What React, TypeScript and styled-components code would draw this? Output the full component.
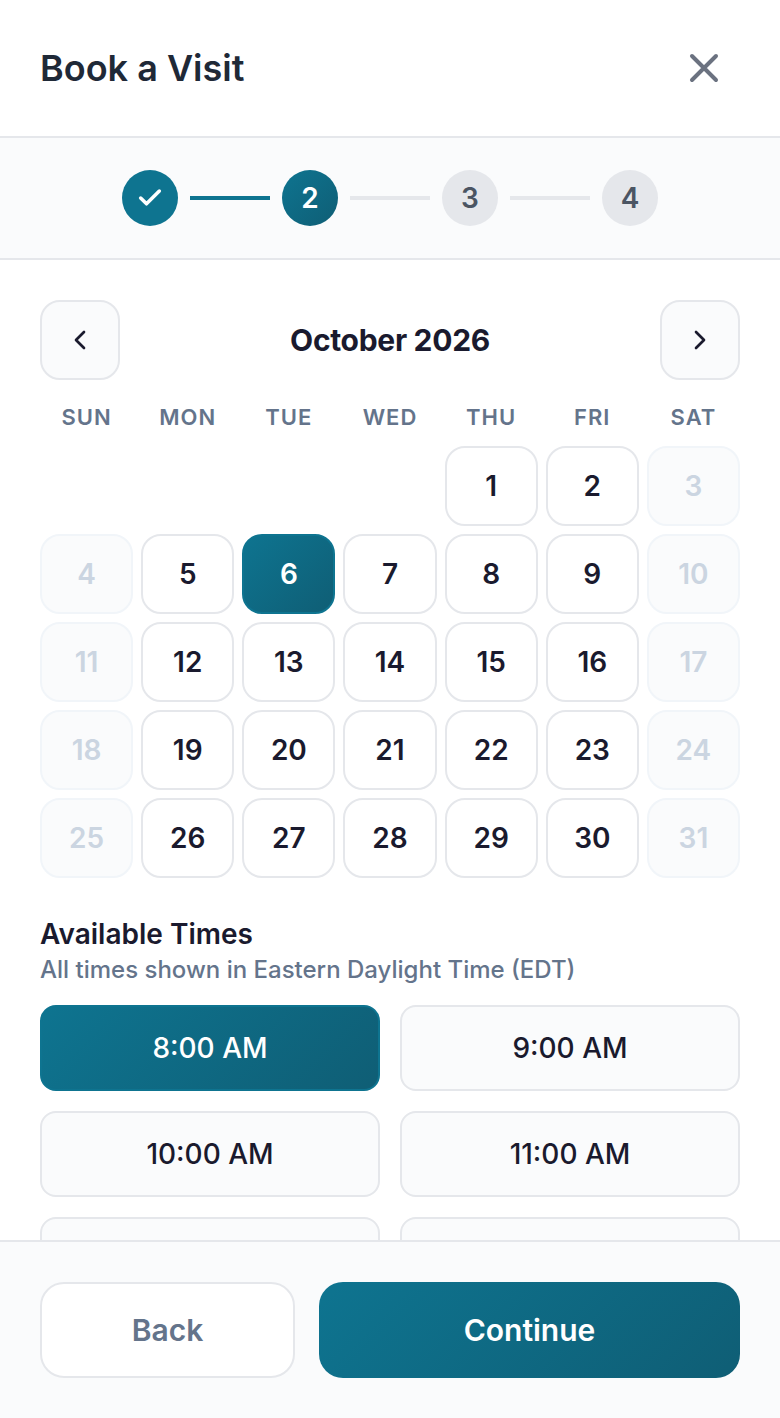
import React from "react";
import styled, { createGlobalStyle } from "styled-components";

const Global = createGlobalStyle`
  html, body { margin: 0; padding: 0; background: #fff; }
  * { box-sizing: border-box; }
  body { font-family: Inter, "Liberation Sans", sans-serif; }
`;

const teal = "linear-gradient(135deg, #0e7490 0%, #0f5e75 100%)";
const panel = "#fafbfc";

const Page = styled.div`
  width: 780px;
  height: 1418px;
  display: flex;
  flex-direction: column;
  background: #fff;
  overflow: hidden;
`;
const Header = styled.header`
  height: 138px;
  flex: none;
  display: flex;
  align-items: center;
  justify-content: space-between;
  padding: 0 40px;
  border-bottom: 2px solid #e5e7eb;
`;
const Title = styled.h1`
  margin: 0;
  font-size: 36px;
  line-height: 44px;
  font-weight: 600;
  color: #1f2937;
`;
const CloseButton = styled.button`
  width: 72px;
  height: 72px;
  padding: 0;
  border: 0;
  background: none;
  color: #6b7280;
  display: flex;
  align-items: center;
  justify-content: center;
`;
const Stepper = styled.div`
  height: 122px;
  flex: none;
  display: flex;
  align-items: center;
  justify-content: center;
  gap: 12px;
  background: ${panel};
  border-bottom: 2px solid #e5e7eb;
`;
const Step = styled.div<{ $state: "done" | "active" | "todo" }>`
  width: 56px;
  height: 56px;
  border-radius: 50%;
  display: flex;
  align-items: center;
  justify-content: center;
  font-size: 28px;
  font-weight: 600;
  color: ${(p) => (p.$state === "todo" ? "#4b5563" : "#fff")};
  background: ${(p) =>
    p.$state === "todo" ? "#e5e7eb" : p.$state === "done" ? "#0e7490" : teal};
`;
const Connector = styled.div<{ $done?: boolean }>`
  width: 80px;
  height: 4px;
  background: ${(p) => (p.$done ? "#0e7490" : "#e5e7eb")};
`;
const Content = styled.main`
  flex: 1;
  min-height: 0;
  overflow: hidden;
  padding: 40px 40px 0;
`;
const MonthNav = styled.div`
  display: flex;
  align-items: center;
  justify-content: space-between;
  margin-bottom: 16px;
`;
const NavButton = styled.button`
  width: 80px;
  height: 80px;
  padding: 0;
  border: 2px solid #e5e7eb;
  border-radius: 20px;
  background: ${panel};
  color: #1a1a2e;
  display: flex;
  align-items: center;
  justify-content: center;
`;
const Month = styled.h2`
  margin: 0;
  font-size: 30px;
  font-weight: 700;
  letter-spacing: -0.01em;
  color: #1a1a2e;
`;
const Weekdays = styled.div`
  display: grid;
  grid-template-columns: repeat(7, 1fr);
  gap: 8px;
  margin-bottom: 8px;
`;
const Weekday = styled.div`
  height: 42px;
  display: flex;
  align-items: center;
  justify-content: center;
  font-size: 22px;
  font-weight: 600;
  letter-spacing: 1px;
  color: #64748b;
`;
const Days = styled.div`
  display: grid;
  grid-template-columns: repeat(7, 1fr);
  gap: 8px;
`;
const Day = styled.button<{ $state: "open" | "off" | "selected" }>`
  height: 80px;
  padding: 0;
  border-radius: 20px;
  font-family: inherit;
  font-size: 28px;
  font-weight: 600;
  border: 2px solid
    ${(p) =>
      p.$state === "selected" ? "#0e7490" : p.$state === "off" ? "#f1f5f9" : "#e5e7eb"};
  background: ${(p) =>
    p.$state === "selected" ? teal : p.$state === "off" ? panel : "#fff"};
  color: ${(p) =>
    p.$state === "selected" ? "#fff" : p.$state === "off" ? "#cbd5e1" : "#1a1a2e"};
`;
const TimesHeading = styled.h3`
  margin: 39px 0 0;
  font-size: 28px;
  line-height: 34px;
  font-weight: 600;
  color: #1a1a2e;
`;
const TimesNote = styled.p`
  margin: 2px 0 18px;
  font-size: 24px;
  line-height: 34px;
  font-weight: 500;
  color: #64748b;
`;
const Times = styled.div`
  display: grid;
  grid-template-columns: 1fr 1fr;
  gap: 20px;
`;
const Time = styled.button<{ $selected?: boolean }>`
  height: 86px;
  padding: 0;
  border-radius: 16px;
  font-family: inherit;
  font-size: 28px;
  font-weight: 500;
  border: 2px solid ${(p) => (p.$selected ? "#0e7490" : "#e5e7eb")};
  background: ${(p) => (p.$selected ? teal : panel)};
  color: ${(p) => (p.$selected ? "#fff" : "#1a1a2e")};
`;
const Footer = styled.footer`
  height: 178px;
  flex: none;
  display: flex;
  gap: 24px;
  padding: 40px 40px 0;
  background: ${panel};
  border-top: 2px solid #e5e7eb;
`;
const BackButton = styled.button`
  flex: 0 0 255px;
  height: 96px;
  border: 2px solid #e5e7eb;
  border-radius: 24px;
  background: #fff;
  color: #64748b;
  font-family: inherit;
  font-size: 30px;
  font-weight: 600;
`;
const ContinueButton = styled.button`
  flex: 1;
  height: 96px;
  border: 0;
  border-radius: 24px;
  background: ${teal};
  color: #fff;
  font-family: inherit;
  font-size: 30px;
  font-weight: 600;
`;

const off = new Set([3, 4, 10, 11, 17, 18, 24, 25, 31]);
const days = Array.from({ length: 31 }, (_, i) => i + 1);
const times = ["8:00 AM", "9:00 AM", "10:00 AM", "11:00 AM"];

export default function App() {
  return (
    <Page>
      <Global />
      <Header>
        <Title>Book a Visit</Title>
        <CloseButton aria-label="Close">
          <svg width="48" height="48" viewBox="0 0 24 24" fill="none" stroke="currentColor" strokeWidth="2" strokeLinecap="round" strokeLinejoin="round">
            <path d="M18 6 6 18M6 6l12 12" />
          </svg>
        </CloseButton>
      </Header>
      <Stepper>
        <Step $state="done">
          <svg width="28" height="28" viewBox="0 0 24 24" fill="none" stroke="currentColor" strokeWidth="3" strokeLinecap="round" strokeLinejoin="round">
            <path d="M20 6 9 17l-5-5" />
          </svg>
        </Step>
        <Connector $done />
        <Step $state="active">2</Step>
        <Connector />
        <Step $state="todo">3</Step>
        <Connector />
        <Step $state="todo">4</Step>
      </Stepper>
      <Content>
        <MonthNav>
          <NavButton aria-label="Previous month">
            <svg width="32" height="32" viewBox="0 0 24 24" fill="none" stroke="currentColor" strokeWidth="2" strokeLinecap="round" strokeLinejoin="round">
              <path d="m15 18-6-6 6-6" />
            </svg>
          </NavButton>
          <Month>October 2026</Month>
          <NavButton aria-label="Next month">
            <svg width="32" height="32" viewBox="0 0 24 24" fill="none" stroke="currentColor" strokeWidth="2" strokeLinecap="round" strokeLinejoin="round">
              <path d="m9 18 6-6-6-6" />
            </svg>
          </NavButton>
        </MonthNav>
        <Weekdays>
          {["SUN", "MON", "TUE", "WED", "THU", "FRI", "SAT"].map((d) => (
            <Weekday key={d}>{d}</Weekday>
          ))}
        </Weekdays>
        <Days>
          {[0, 1, 2, 3].map((i) => (
            <div key={`e${i}`} />
          ))}
          {days.map((d) => (
            <Day key={d} $state={d === 6 ? "selected" : off.has(d) ? "off" : "open"}>
              {d}
            </Day>
          ))}
        </Days>
        <TimesHeading>Available Times</TimesHeading>
        <TimesNote>All times shown in Eastern Daylight Time (EDT)</TimesNote>
        <Times>
          {times.map((t, i) => (
            <Time key={t} $selected={i === 0}>
              {t}
            </Time>
          ))}
          <Time aria-label="Next time" />
          <Time aria-label="Later time" />
        </Times>
      </Content>
      <Footer>
        <BackButton>Back</BackButton>
        <ContinueButton>Continue</ContinueButton>
      </Footer>
    </Page>
  );
}
